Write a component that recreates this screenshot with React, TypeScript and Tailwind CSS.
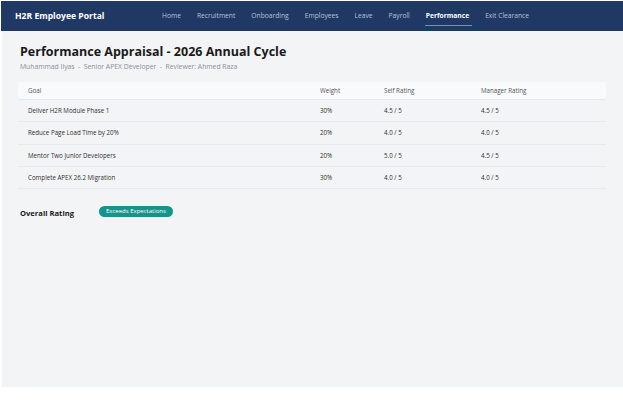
import React from "react";

const nav = ["Home", "Recruitment", "Onboarding", "Employees", "Leave", "Payroll", "Performance", "Exit Clearance"];
const rows = [
  ["Deliver H2R Module Phase 1", "30%", "4.5 / 5", "4.5 / 5"],
  ["Reduce Page Load Time by 20%", "20%", "4.0 / 5", "4.0 / 5"],
  ["Mentor Two Junior Developers", "20%", "5.0 / 5", "4.5 / 5"],
  ["Complete APEX 26.2 Migration", "30%", "4.0 / 5", "4.0 / 5"],
];

export default function App() {
  return (
    <div className="w-[623px] h-[405px] bg-white pl-px pt-px" style={{ fontFamily: '"Open Sans", "Noto Sans", sans-serif' }}>
      <header className="h-[30px] bg-[#1f3864] flex items-center pl-[14px]">
        <div className="text-white font-bold text-[8.6px] w-[147px]">H2R Employee Portal</div>
        <nav className="flex items-center gap-[16px] h-full">
          {nav.map((n) =>
            n === "Performance" ? (
              <div key={n} className="relative h-full flex items-center text-white font-bold text-[6.7px]">
                {n}
                <div className="absolute left-[-1px] right-[-3px] bottom-[5px] h-[1.5px] bg-[#2bb5a8]" />
              </div>
            ) : (
              <div key={n} className="text-[#b8c4d9] text-[6.7px]">{n}</div>
            )
          )}
        </nav>
      </header>
      <main className="ml-px h-[356px] bg-[#f3f4f6] pt-[11px] px-[16px]">
        <h1 className="ml-[2px] text-[12.5px] font-bold text-[#1a1a1a] leading-[20px]">Performance Appraisal - 2026 Annual Cycle</h1>
        <div className="ml-[2px] text-[6.8px] text-[#8a8f98] leading-[10px]">
          Muhammad Ilyas&nbsp; - &nbsp;Senior APEX Developer&nbsp; - &nbsp;Reviewer: Ahmed Raza
        </div>
        <div className="mt-[10px] w-[588px] text-[6.2px] text-[#2f2f2f]">
          <div className="grid grid-cols-[292px_64px_97px_1fr] h-[18px] items-center bg-[#f9fafb] rounded-[3px] border-b border-[#e5e7eb] pl-[10px] text-[#555]">
            <div>Goal</div>
            <div>Weight</div>
            <div>Self Rating</div>
            <div>Manager Rating</div>
          </div>
          {rows.map((r) => (
            <div key={r[0]} className="grid grid-cols-[292px_64px_97px_1fr] h-[22.3px] items-center border-b border-[#e8eaee] pl-[10px]">
              {r.map((c, i) => (
                <div key={i}>{c}</div>
              ))}
            </div>
          ))}
        </div>
        <div className="mt-[19px] ml-[2px] flex items-center">
          <div className="w-[79px] text-[7.6px] font-bold text-[#1a1a1a]">Overall Rating</div>
          <div className="h-[11px] px-[7px] rounded-full bg-[#14948a] text-white text-[6px] flex items-center -mt-[4px]">Exceeds Expectations</div>
        </div>
      </main>
    </div>
  );
}
